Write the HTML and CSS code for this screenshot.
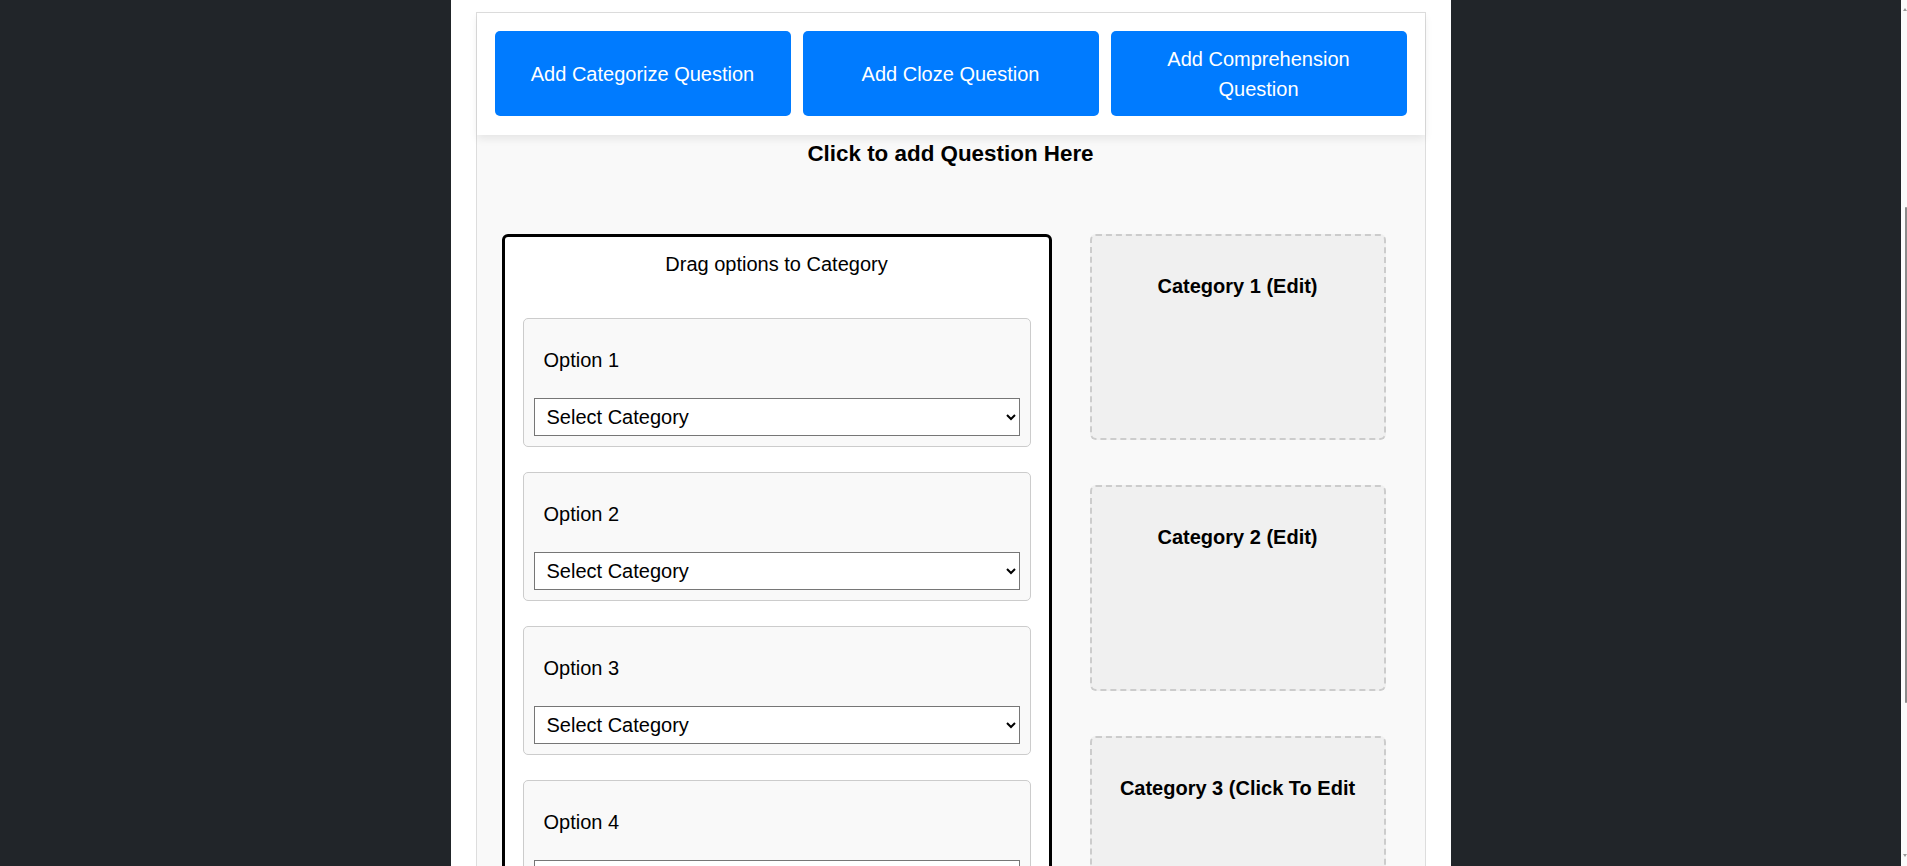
FILE: index.html
```html
<!DOCTYPE html>
<html lang="en">
<head>
<meta charset="utf-8">
<title>Form Builder</title>
<link rel="stylesheet" href="styles.css">
</head>
<body>
<div class="screen">
  <div class="page">
    <main class="column">
      <section class="builder">
        <div class="toolbar">
          <button class="add-btn" type="button">Add Categorize Question</button>
          <button class="add-btn" type="button">Add Cloze Question</button>
          <button class="add-btn" type="button">Add Comprehension Question</button>
        </div>
        <h2 class="q-title">Click to add Question Here</h2>
        <div class="categorize">
          <div class="options-box">
            <p class="options-title">Drag options to Category</p>
            <div class="option-card">
              <div class="option-label">Option 1</div>
              <select class="option-select"><option>Select Category</option></select>
            </div>
            <div class="option-card">
              <div class="option-label">Option 2</div>
              <select class="option-select"><option>Select Category</option></select>
            </div>
            <div class="option-card">
              <div class="option-label">Option 3</div>
              <select class="option-select"><option>Select Category</option></select>
            </div>
            <div class="option-card">
              <div class="option-label">Option 4</div>
              <select class="option-select"><option>Select Category</option></select>
            </div>
          </div>
          <div class="categories">
            <div class="category"><div class="category-title">Category 1 (Edit)</div></div>
            <div class="category"><div class="category-title">Category 2 (Edit)</div></div>
            <div class="category"><div class="category-title">Category 3 (Click To Edit</div></div>
          </div>
        </div>
      </section>
    </main>
  </div>
  <div class="scrollbar">
    <span class="sb-arrow sb-up"></span>
    <div class="sb-track"><div class="sb-thumb"></div></div>
    <span class="sb-arrow sb-down"></span>
  </div>
</div>
</body>
</html>
```

FILE: styles.css
```css
* { box-sizing: border-box; }

html, body {
  margin: 0;
  padding: 0;
  height: 100%;
  overflow: hidden;
}

body {
  font-family: "Liberation Sans", Arial, Helvetica, sans-serif;
  color: #000;
  background: #212529;
}

.screen {
  display: flex;
  height: 100vh;
}

.page {
  flex: 1;
  background: #212529;
  overflow: hidden;
}

.column {
  width: 1000px;
  margin: 0 auto;
  min-height: 100%;
  background: #ffffff;
  padding: 12px 25px 0;
}

.builder {
  border: 1px solid #dddddd;
  background: #f9f9f9;
  min-height: 900px;
}

.toolbar {
  display: flex;
  gap: 12px;
  padding: 18px 18px 19px;
  background: #ffffff;
  box-shadow: 0 4px 8px rgba(0, 0, 0, 0.08);
}

.add-btn {
  flex: 1;
  min-height: 85px;
  padding: 12px 20px;
  border: 0;
  border-radius: 5px;
  background: #007bff;
  color: #ffffff;
  font-family: "Liberation Sans", Arial, Helvetica, sans-serif;
  font-size: 20px;
  line-height: 30px;
  text-align: center;
}

.q-title {
  margin: 6px 0 0;
  font-size: 22.4px;
  line-height: 26px;
  font-weight: bold;
  text-align: center;
}

.categorize {
  display: flex;
  align-items: flex-start;
  gap: 38px;
  margin-top: 67px;
  padding-left: 25px;
}

.options-box {
  width: 550px;
  flex: none;
  background: #ffffff;
  border: 3px solid #000000;
  border-radius: 6px;
  padding: 16px 18px;
}

.options-title {
  margin: 0 0 42px;
  font-size: 20px;
  line-height: 23px;
  text-align: center;
}

.option-card {
  background: #f9f9f9;
  border: 1px solid #cccccc;
  border-radius: 5px;
  padding: 10px;
  margin-bottom: 25px;
}

.option-label {
  padding: 20px 10px 0;
  font-size: 20px;
  line-height: 23px;
}

.option-select {
  display: block;
  width: 100%;
  height: 38px;
  margin-top: 26px;
  padding: 0 8px;
  background: #ffffff;
  border: 1px solid #767676;
  border-radius: 0;
  color: #000;
  font-family: "Liberation Sans", Arial, Helvetica, sans-serif;
  font-size: 20px;
}

.categories {
  width: 296px;
  flex: none;
  display: flex;
  flex-direction: column;
  gap: 45px;
}

.category {
  height: 206px;
  background: #f0f0f0;
  border: 2px dashed #cccccc;
  border-radius: 6px;
  padding-top: 39px;
  text-align: center;
}

.category-title {
  font-size: 20px;
  line-height: 23px;
  font-weight: bold;
}

.scrollbar {
  width: 6px;
  flex: none;
  background: #fbfbfb;
  display: flex;
  flex-direction: column;
  align-items: flex-end;
  padding: 8px 0 9px;
}

.sb-arrow {
  width: 0;
  height: 0;
  border-left: 2px solid transparent;
  border-right: 2px solid transparent;
}

.sb-up {
  border-bottom: 3px solid #9a9a9a;
}

.sb-down {
  border-top: 3px solid #9a9a9a;
}

.sb-track {
  flex: 1;
  width: 100%;
  display: flex;
  justify-content: flex-end;
  padding-top: 196px;
}

.sb-thumb {
  width: 2px;
  height: 496px;
  background: #8b8b8b;
  border-radius: 1px;
}
```
